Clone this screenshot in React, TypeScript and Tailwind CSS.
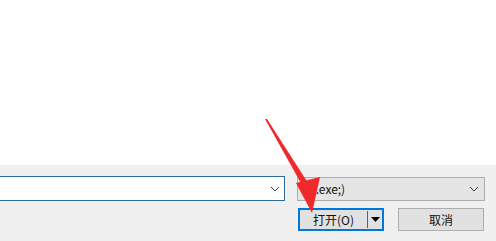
import React from "react";

const font = { fontFamily: '"Microsoft YaHei", "Noto Sans CJK SC", "Noto Sans", sans-serif' };

const Chevron = () => (
  <svg width="10" height="6" viewBox="0 0 10 6" className="shrink-0">
    <path d="M1 1 L5 5 L9 1" fill="none" stroke="#404040" strokeWidth="1" />
  </svg>
);

export default function App() {
  return (
    <div className="relative w-[496px] h-[241px] overflow-hidden flex flex-col" style={font}>
      <div className="h-[165px] bg-white" />
      <div className="flex-1 bg-[#f0f0f0] pt-[11px] flex flex-col gap-[7px]">
        <div className="flex items-center h-[25px]">
          <div className="w-[285px] h-[25px] bg-white border-y border-r border-[#2a6d9c] flex items-center justify-end pr-[4px]">
            <Chevron />
          </div>
          <div className="ml-[12px] w-[188px] h-[24px] bg-[#e5e5e5] border border-[#adadad] flex items-center justify-between pl-[8px] pr-[5px] text-[12px] text-[#111]">
            <span className="leading-none">(*.exe;)</span>
            <Chevron />
          </div>
        </div>
        <div className="flex h-[23px] justify-end pr-[12px] gap-[14px]">
          <div className="w-[86px] h-[23px] bg-[#e1e1e1] border-2 border-[#0078d7] flex items-stretch text-[12px] text-[#111]">
            <div className="flex-1 flex items-center justify-center">打开(O)</div>
            <div className="w-px bg-[#606060] my-[1px]" />
            <div className="w-[14px] flex items-center justify-center">
              <svg width="9" height="5" viewBox="0 0 9 5">
                <path d="M0 0 H9 L4.5 5 Z" fill="#000" />
              </svg>
            </div>
          </div>
          <div className="w-[86px] h-[23px] bg-[#e1e1e1] border border-[#adadad] flex items-center justify-center text-[12px] text-[#111]">
            取消
          </div>
        </div>
      </div>
      <svg className="absolute inset-0 pointer-events-none" width="496" height="241" viewBox="0 0 496 241">
        <polygon points="265,119 267,119 308,183 302,185" fill="#f0292a" />
        <polygon points="296,183 320,177 312,213" fill="#f0292a" />
      </svg>
    </div>
  );
}
